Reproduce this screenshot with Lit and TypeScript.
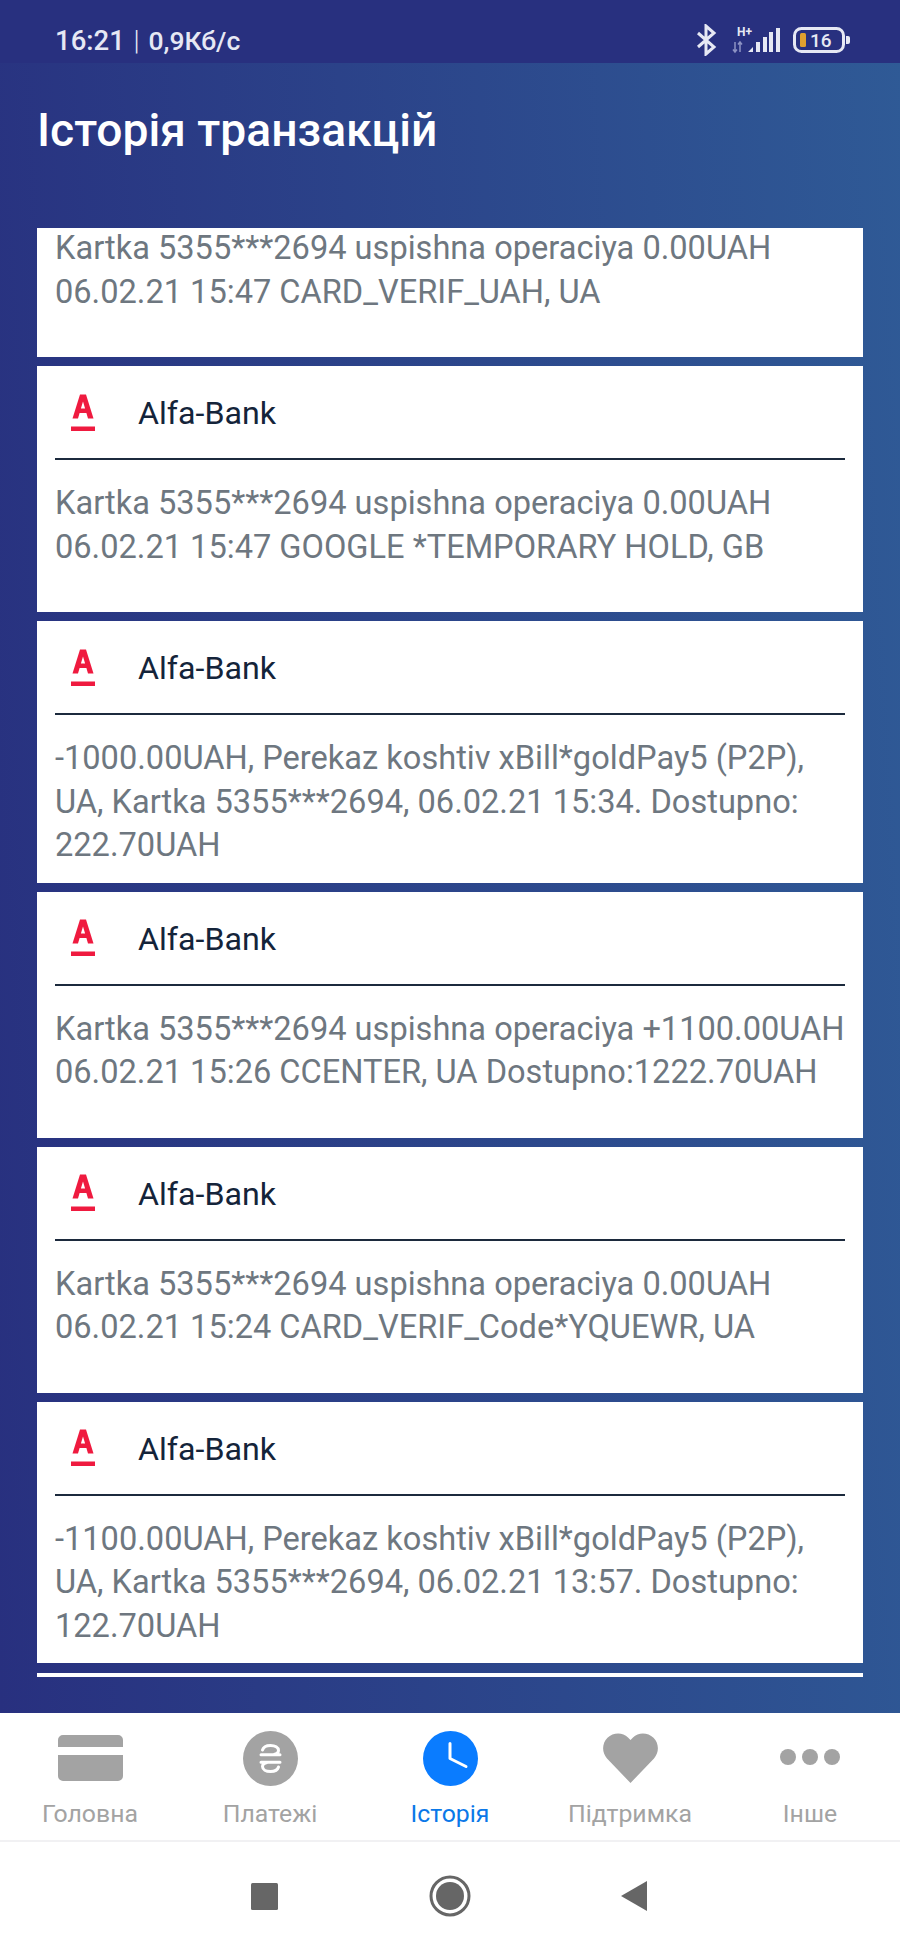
import { LitElement, html, css, svg } from "lit";
import { customElement } from "lit/decorators.js";

const alfaLogo = html`<svg class="logo" viewBox="0 0 24 37" width="24" height="37">
  <path fill="#ef1a3f" fill-rule="evenodd" d="M9 .5h6l7.500 24h-5.500l-1.600-5.500H8.600L7 24.500H1.500zM9.900 14.500h4.200L12 7.500z" />
  <rect x="0" y="32.500" width="24" height="4.500" fill="#ef1a3f" />
</svg>`;

const messages = [
  "Kartka 5355***2694 uspishna operaciya 0.00UAH 06.02.21 15:47 GOOGLE *TEMPORARY HOLD, GB",
  "-1000.00UAH, Perekaz koshtiv xBill*goldPay5 (P2P), UA, Kartka 5355***2694, 06.02.21 15:34. Dostupno: 222.70UAH",
  "Kartka 5355***2694 uspishna operaciya +1100.00UAH 06.02.21 15:26 CCENTER, UA Dostupno:1222.70UAH",
  "Kartka 5355***2694 uspishna operaciya 0.00UAH 06.02.21 15:24 CARD_VERIF_Code*YQUEWR, UA",
  "-1100.00UAH, Perekaz koshtiv xBill*goldPay5 (P2P), UA, Kartka 5355***2694, 06.02.21 13:57. Dostupno: 122.70UAH",
];

const navItems = [
  {
    label: "Головна",
    icon: svg`<path fill="#a3a3a3" d="M5 0h55a5 5 0 0 1 5 5v7H0V5a5 5 0 0 1 5-5zM0 20h65v21a5 5 0 0 1-5 5H5a5 5 0 0 1-5-5z" />`,
    box: [65, 46],
  },
  {
    label: "Платежі",
    icon: svg`<circle cx="27.5" cy="27.5" r="27.5" fill="#a3a3a3" />
      <path fill="none" stroke="#fff" stroke-width="3" stroke-linecap="round" d="M19.500 19C20.500 15.500 24 14.500 27.500 14.500 32 14.500 35.500 16.500 35.500 19.500 35.500 21.500 33.500 23 31 23.500M35.500 36C34.500 39.500 31 40.500 27.500 40.500 23 40.500 19.500 38.500 19.500 35.500 19.500 33.500 21.500 32 24 31.500M18 23.700h19M18 31.300h19" />`,
    box: [55, 55],
  },
  {
    label: "Історія",
    active: true,
    icon: svg`<circle cx="27.500" cy="27.500" r="27.500" fill="#0a7cff" />
      <path fill="none" stroke="#fff" stroke-width="3" stroke-linecap="round" stroke-linejoin="round" d="M27 12.500v15l16 8" />`,
    box: [55, 55],
  },
  {
    label: "Підтримка",
    icon: svg`<path fill="#a3a3a3" d="M27.500 50 4 25.500C-1.500 19.500-1 10 4.500 4.800 10-.5 19.500-1 25 4.500l2.500 2.500L30 4.500C35.500-1 45-.5 50.500 4.800 56 10 56.500 19.500 51 25.500z" />`,
    box: [55, 50],
  },
  {
    label: "Інше",
    icon: svg`<circle cx="8" cy="8" r="8" fill="#a3a3a3" /><circle cx="30" cy="8" r="8" fill="#a3a3a3" /><circle cx="52" cy="8" r="8" fill="#a3a3a3" />`,
    box: [60, 18],
  },
];

@customElement("app-root")
export class AppRoot extends LitElement {
  static styles = css`
    :host {
      display: flex;
      flex-direction: column;
      width: 900px;
      height: 1950px;
      overflow: hidden;
      font-family: Roboto, "Liberation Sans", sans-serif;
      background: #fff;
    }

    .main {
      flex: 1;
      min-height: 0;
      display: flex;
      flex-direction: column;
      background: linear-gradient(87deg, #28307f 0%, #2f5a96 100%);
    }

    .status {
      height: 63px;
      box-sizing: border-box;
      padding: 17px 50px 0 55px;
      flex: none;
      background: #28307f;
      display: flex;
      align-items: center;
      justify-content: space-between;
      color: #e6e8f4;
      font-size: 27.500px;
      font-weight: 500;
    }

    .status .sep {
      font-weight: 300;
      margin: 0 2px;
    }

    .status .speed {
      font-size: 26.500px;
    }

    .status-icons {
      display: block;
    }

    .title {
      margin: 0;
      flex: none;
      height: 165px;
      box-sizing: border-box;
      padding: 39px 37px 0;
      font-size: 46.200px;
      line-height: 56px;
      font-weight: 500;
      color: #fff;
    }

    .scroller {
      flex: 1;
      min-height: 0;
      margin: 0 37px 36px;
      overflow: hidden;
    }

    .list {
      display: flex;
      flex-direction: column;
      gap: 9px;
    }

    .card {
      background: #fff;
      flex: none;
    }

    .card-head {
      margin: 0 18px;
      height: 94px;
      box-sizing: border-box;
      display: flex;
      align-items: center;
      gap: 43px;
      padding-left: 16px;
      border-bottom: 2px solid #1c2a3d;
      color: #14243a;
      font-size: 32.200px;
    }

    .card-head span {
      padding-top: 2px;
    }

    .logo {
      flex: none;
    }

    .card-text {
      margin: 0 18px;
      padding: 22px 0 15px;
      min-height: 115px;
      font-size: 32.600px;
      line-height: 43.500px;
      color: #6e7780;
    }

    /* the top card is scrolled under the header, only its text still shows */
    .card.cut {
      height: 129px;
      overflow: hidden;
    }

    .card.cut .card-text {
      padding: 0;
      margin-top: -1px;
    }

    /* the next card just starts to show at the bottom edge */
    .card.next {
      height: 40px;
      margin-top: 1px;
    }

    .nav {
      flex: none;
      height: 129px;
      box-sizing: border-box;
      display: grid;
      grid-template-columns: repeat(5, 1fr);
      border-bottom: 2px solid #f1f1f3;
      background: #fff;
    }

    .nav-item {
      display: flex;
      flex-direction: column;
      align-items: center;
      color: #a3a3a3;
      font-size: 24.800px;
    }

    .nav-item.active {
      color: #0a78e8;
    }

    .nav-icon {
      height: 72px;
      display: flex;
      align-items: center;
      justify-content: center;
      margin-top: 9px;
      margin-bottom: 5px;
    }

    .sys {
      flex: none;
      height: 108px;
      display: flex;
      align-items: center;
      justify-content: center;
      background: #fff;
    }

    .sys-btn {
      width: 186px;
      display: flex;
      justify-content: center;
    }
  `;

  private renderCard(text: string) {
    return html`<div class="card">
      <div class="card-head">${alfaLogo}<span>Alfa-Bank</span></div>
      <p class="card-text">${text}</p>
    </div>`;
  }

  render() {
    return html`
      <div class="main">
        <div class="status">
          <span>16:21 <span class="sep">|</span> <span class="speed">0,9Кб/с</span></span>
          <svg class="status-icons" width="155" height="32" viewBox="0 0 155 32">
            <path fill="none" stroke="#e6e8f4" stroke-width="3" d="M3 9l16 14-8 7V2l8 7L3 23" />
            <text x="42" y="12" font-size="12" font-weight="700" fill="#e6e8f4" font-family="Roboto">H+</text>
            <path fill="none" stroke="#8d93c4" stroke-width="1.500" d="M40 18v10M38 25.500l2 2.500 2-2.500M45 28V18M43 20.500l2-2.500 2 2.500" />
            <path fill="#e6e8f4" d="M53 28l5-5v5zM61 18h4v10h-4zM68 13h4v15h-4zM74 8h4v20h-4zM81 4h4v24h-4z" />
            <rect x="99.500" y="4.500" width="49" height="23" rx="7" fill="none" stroke="#e6e8f4" stroke-width="3" />
            <rect x="105" y="9" width="6" height="14" rx="1.500" fill="#e0a030" />
            <text x="115" y="23" font-size="19" fill="#e6e8f4" font-family="Roboto">16</text>
            <path fill="#e6e8f4" d="M151 12h2a2 2 0 0 1 2 2v4a2 2 0 0 1-2 2h-2z" />
          </svg>
        </div>
        <h1 class="title">Історія транзакцій</h1>
        <div class="scroller">
          <div class="list">
            <div class="card cut">
              <p class="card-text">Kartka 5355***2694 uspishna operaciya 0.00UAH 06.02.21 15:47 CARD_VERIF_UAH, UA</p>
            </div>
            ${messages.map((m) => this.renderCard(m))}
            <div class="card next"></div>
          </div>
        </div>
      </div>
      <div class="nav">
        ${navItems.map(
          (n) => html`<div class="nav-item ${n.active ? "active" : ""}">
            <div class="nav-icon">
              <svg width=${n.box[0]} height=${n.box[1]} viewBox="0 0 ${n.box[0]} ${n.box[1]}">${n.icon}</svg>
            </div>
            <span>${n.label}</span>
          </div>`
        )}
      </div>
      <div class="sys">
        <div class="sys-btn">
          <svg width="27" height="27"><rect width="27" height="27" rx="1.500" fill="#666" /></svg>
        </div>
        <div class="sys-btn">
          <svg width="42" height="42" viewBox="0 0 42 42">
            <circle cx="21" cy="21" r="19" fill="none" stroke="#666" stroke-width="3" />
            <circle cx="21" cy="21" r="14" fill="#666" />
          </svg>
        </div>
        <div class="sys-btn">
          <svg width="30" height="30" viewBox="0 0 30 30"><path fill="#666" d="M0 15 26 0v30z" /></svg>
        </div>
      </div>
    `;
  }
}
